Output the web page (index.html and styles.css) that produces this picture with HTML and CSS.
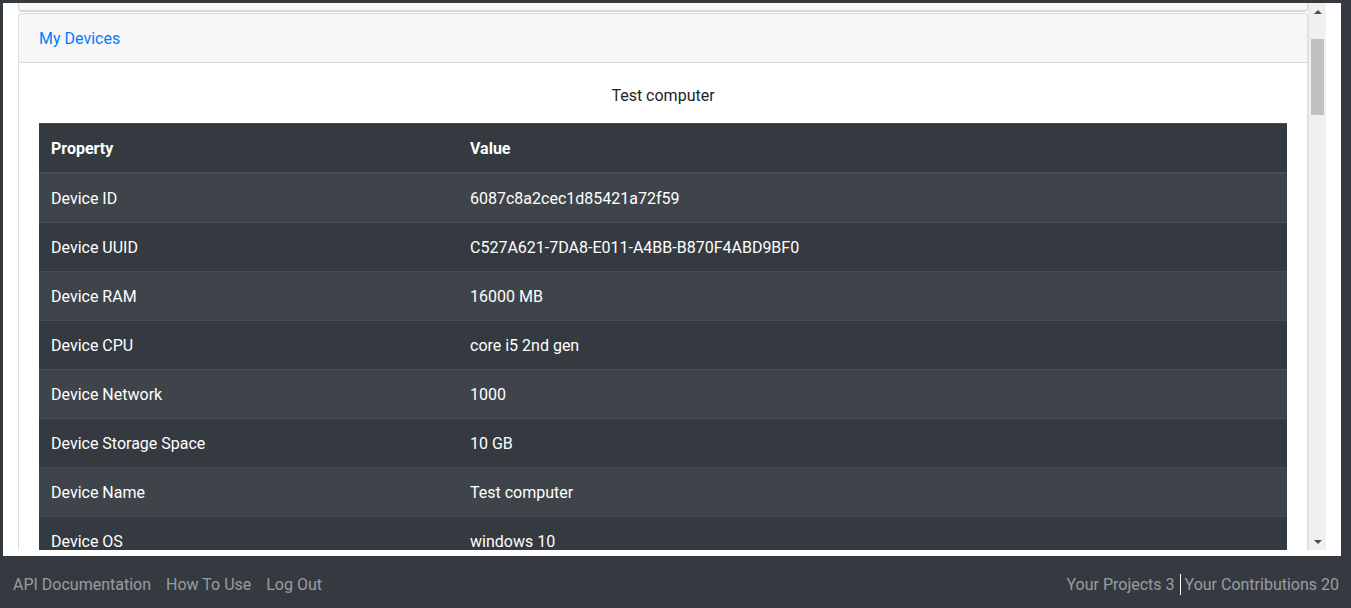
FILE: index.html
```html
<!DOCTYPE html>
<html>
<head>
<meta charset="utf-8">
<title>My Devices</title>
<link rel="stylesheet" href="styles.css">
</head>
<body>
<div class="frame">
  <div class="viewport">
    <div class="content">
      <div class="card card-prev"></div>
      <div class="card">
        <div class="card-header"><a class="header-link" href="#">My Devices</a></div>
        <div class="card-body">
          <p class="device-title">Test computer</p>
          <table class="table">
            <thead>
              <tr><th class="col-prop">Property</th><th>Value</th></tr>
            </thead>
            <tbody>
              <tr><td>Device ID</td><td>6087c8a2cec1d85421a72f59</td></tr>
              <tr><td>Device UUID</td><td>C527A621-7DA8-E011-A4BB-B870F4ABD9BF0</td></tr>
              <tr><td>Device RAM</td><td>16000 MB</td></tr>
              <tr><td>Device CPU</td><td>core i5 2nd gen</td></tr>
              <tr><td>Device Network</td><td>1000</td></tr>
              <tr><td>Device Storage Space</td><td>10 GB</td></tr>
              <tr><td>Device Name</td><td>Test computer</td></tr>
              <tr><td>Device OS</td><td>windows 10</td></tr>
            </tbody>
          </table>
        </div>
      </div>
    </div>
    <div class="scrollbar">
      <div class="sb-arrow sb-up"></div>
      <div class="sb-track"><div class="sb-thumb"></div></div>
      <div class="sb-arrow sb-down"></div>
    </div>
  </div>
</div>
<nav class="footer">
  <div class="footer-left">
    <a class="nav-link" href="#">API Documentation</a>
    <a class="nav-link" href="#">How To Use</a>
    <a class="nav-link" href="#">Log Out</a>
  </div>
  <div class="footer-right">
    <span class="stat">Your Projects 3</span>
    <span class="divider"></span>
    <span class="stat">Your Contributions 20</span>
  </div>
</nav>
</body>
</html>
```
FILE: styles.css
```css
html, body {
  margin: 0;
  padding: 0;
}
body {
  background: #343a40;
  font-family: Roboto, "Noto Sans", sans-serif;
  font-size: 16px;
  line-height: 24px;
  color: #212529;
  height: 608px;
  overflow: hidden;
  display: flex;
  flex-direction: column;
}
.frame {
  margin: 3px 10px 0 3px;
  background: #fff;
  height: 553px;
  flex: none;
  box-sizing: border-box;
  padding: 0 15px 6px 0;
  display: flex;
}
.viewport {
  flex: 1;
  display: flex;
  height: 547px;
  overflow: hidden;
}
.content {
  flex: 1;
  padding-left: 15px;
  overflow: hidden;
}
.card {
  border: 1px solid rgba(0, 0, 0, .125);
  border-radius: 4px;
  background: #fff;
}
.card-prev {
  height: 7px;
  border-top: none;
  border-radius: 0 0 4px 4px;
  background: #f7f7f7;
  border-bottom: 2px solid #dadada;
  margin-bottom: 1px;
}
.card-header {
  padding: 13px 20px 11px;
  background: rgba(0, 0, 0, .03);
  border-bottom: 1px solid rgba(0, 0, 0, .125);
}
.header-link {
  color: #007bff;
  text-decoration: none;
}
.card-body {
  padding: 20px;
}
.device-title {
  margin: 0 0 15px;
  padding-top: 1px;
  text-align: center;
}
.table {
  width: 100%;
  border-collapse: collapse;
  background: #343a40;
  color: #fff;
}
.table th, .table td {
  padding: 13px 12px 11px;
  text-align: left;
  vertical-align: top;
  border-top: 1px solid #454d55;
}
.table thead th {
  font-weight: 700;
  border-bottom: 2px solid #454d55;
  vertical-align: bottom;
}
.col-prop {
  width: 395px;
}
.table tbody tr:nth-child(odd) {
  background: rgba(255, 255, 255, .05);
}
.scrollbar {
  width: 17px;
  flex: none;
  background: #f0f0f0;
  border-left: 1px solid #e3e3e3;
  display: flex;
  flex-direction: column;
}
.sb-arrow {
  height: 17px;
  display: flex;
  align-items: center;
  justify-content: center;
}
.sb-up::before {
  content: "";
  border-left: 4px solid transparent;
  border-right: 4px solid transparent;
  border-bottom: 4px solid #505050;
}
.sb-down::before {
  content: "";
  border-left: 4px solid transparent;
  border-right: 4px solid transparent;
  border-top: 4px solid #505050;
}
.sb-track {
  flex: 1;
  padding: 19px 2px 0 2px;
}
.sb-thumb {
  height: 76px;
  background: #c1c1c1;
}
.footer {
  height: 52px;
  flex: none;
  box-sizing: border-box;
  display: flex;
  align-items: center;
  justify-content: space-between;
  padding: 5px 12px 0 5px;
}
.footer-left {
  display: flex;
}
.nav-link {
  color: rgba(255, 255, 255, .5);
  text-decoration: none;
  padding: 0 8px;
}
.nav-link + .nav-link {
  padding-left: 7px;
}
.footer-right {
  display: flex;
  align-items: center;
  color: rgba(255, 255, 255, .5);
}
.divider {
  width: 1px;
  height: 21px;
  background: #fff;
  margin: 0 4px 0 5px;
}
```
